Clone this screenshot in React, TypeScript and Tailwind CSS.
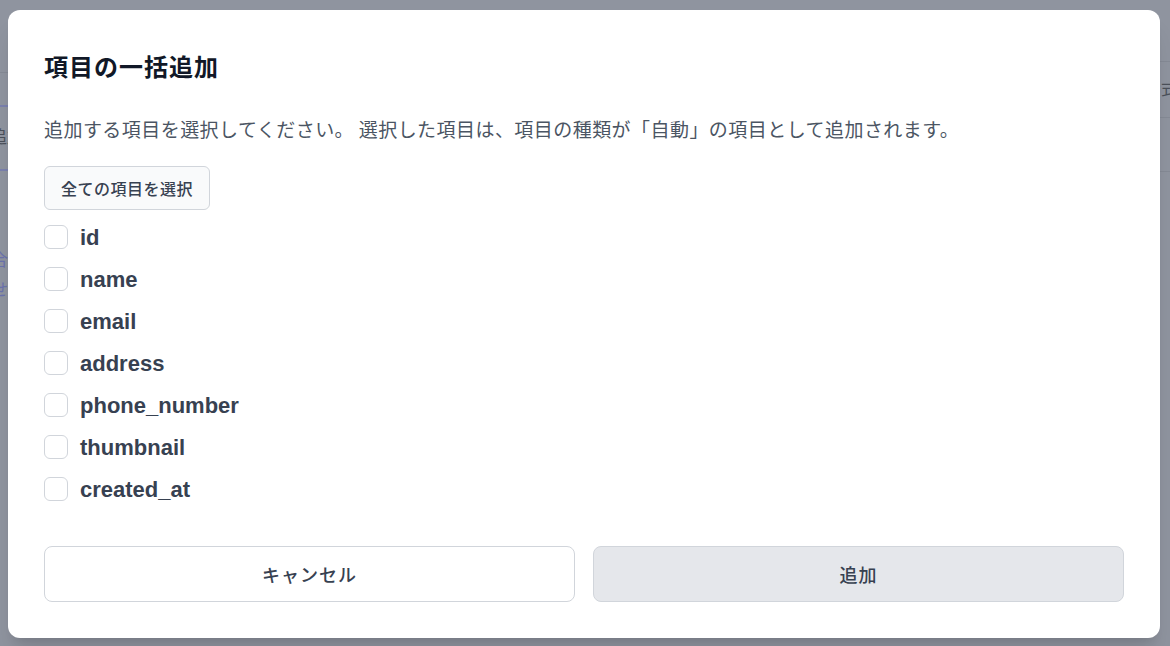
const fields = ["id", "name", "email", "address", "phone_number", "thumbnail", "created_at"];

export default function App() {
  return (
    <div className="relative w-[1170px] h-[646px] overflow-hidden bg-[#8f949f] font-['Liberation_Sans','Noto_Sans_CJK_JP',sans-serif]">
      {/* Dimmed page behind the dialog */}
      <div className="flex h-full">
        <div className="w-[300px] flex flex-col">
          <div className="h-[73px] border-b border-[#858a95]"></div>
          <div className="h-[34px] border-b-2 border-[#7a80ad]"></div>
          <div className="h-[64px] border-b-2 border-[#7a80ad] flex items-center text-[17px] text-[#4b505a]">
            <span className="-ml-[10px]">追加</span>
          </div>
          <div className="pt-[78px] flex flex-col gap-[6px] text-[17px] leading-[24px] text-[#6b72ad]">
            <span className="-ml-[9px]">合</span>
            <span className="-ml-[9px]">せ</span>
          </div>
        </div>
        <div className="flex-1"></div>
        <div className="w-[200px] flex flex-col">
          <div className="h-[62px] border-b border-[#858a95]"></div>
          <div className="h-[56px] border-b border-[#858a95] flex items-center justify-end text-[17px] text-[#4b505a]">
            <span className="-mr-[8px]">式</span>
          </div>
          <div className="h-[54px] border-b border-[#858a95]"></div>
        </div>
      </div>

      {/* Dialog */}
      <div className="absolute inset-0 pt-[10px] pl-[8px]">
        <div className="w-[1152px] h-[628px] bg-white rounded-xl px-[36px] pt-[46px] flex flex-col shadow-xl">
          <h2 className="text-[24px] leading-[44px] tracking-[1px] font-bold text-[#111827] -mt-[12px] font-['Noto_Sans_CJK_JP',sans-serif]">
            項目の一括追加
          </h2>
          <p className="mt-[27px] text-[19px] leading-[28px] tracking-[0.45px] text-[#4b5563] font-['Noto_Sans_CJK_JP',sans-serif]">
            追加する項目を選択してください。 選択した項目は、項目の種類が「自動」の項目として追加されます。
          </p>
          <div className="mt-[23px]">
            <button className="h-[44px] px-[16px] rounded-md border border-[#d1d5db] bg-[#f9fafb] text-[16px] tracking-[0.5px] font-medium text-[#374151] font-['Noto_Sans_CJK_JP',sans-serif]">
              全ての項目を選択
            </button>
          </div>
          <div className="mt-[6px] flex flex-col">
            {fields.map((f) => (
              <label key={f} className="h-[42px] flex items-center gap-[12px]">
                <span className="w-[24px] h-[24px] rounded-[6px] border border-[#d1d5db] bg-white"></span>
                <span className="text-[22px] font-bold text-[#374151]">{f}</span>
              </label>
            ))}
          </div>
          <div className="mt-[36px] grid grid-cols-2 gap-[18px]">
            <button className="h-[56px] rounded-lg border border-[#d1d5db] bg-white text-[18px] tracking-[1px] font-medium text-[#374151] font-['Noto_Sans_CJK_JP',sans-serif]">
              キャンセル
            </button>
            <button className="h-[56px] rounded-lg border border-[#d1d5db] bg-[#e5e7eb] text-[18px] tracking-[1px] font-medium text-[#374151] font-['Noto_Sans_CJK_JP',sans-serif]">
              追加
            </button>
          </div>
        </div>
      </div>
    </div>
  );
}
